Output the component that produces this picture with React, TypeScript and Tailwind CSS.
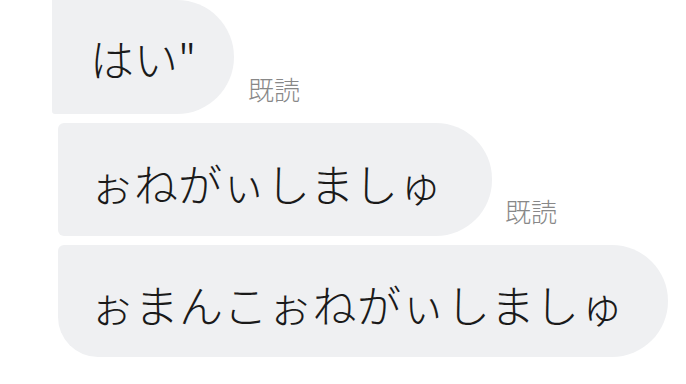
import React from "react";

const font = {
  fontFamily: '"Noto Sans CJK JP", "Noto Sans", sans-serif',
};

export default function App() {
  return (
    <div
      className="w-[686px] h-[384px] bg-white overflow-hidden flex flex-col"
      style={font}
    >
      <div className="flex items-end ml-[52px]">
        <div className="h-[114px] w-[182px] bg-[#eff0f2] rounded-r-[57px] rounded-bl-[3px] flex items-center pl-[38px] pt-[2px]">
          <span className="text-[44px] leading-none font-light text-[#1a1a1a]">はい"</span>
        </div>
        <span className="ml-[14px] mb-[12px] text-[26px] leading-none font-light text-[#888888]">既読</span>
      </div>
      <div className="flex items-end ml-[58px] mt-[9px]">
        <div className="h-[113px] w-[434px] bg-[#eff0f2] rounded-r-[56px] rounded-l-[6px] flex items-center pl-[32px] pt-[6px]">
          <span className="text-[44px] leading-none font-light text-[#1a1a1a]">ぉねがぃしましゅ</span>
        </div>
        <span className="ml-[13px] mb-[12px] text-[26px] leading-none font-light text-[#888888]">既読</span>
      </div>
      <div className="flex items-end ml-[58px] mt-[9px]">
        <div className="h-[112px] w-[610px] bg-[#eff0f2] rounded-r-[56px] rounded-tl-[6px] rounded-bl-[40px] flex items-center pl-[32px] pt-[6px]">
          <span className="text-[44px] leading-none font-light tracking-[0.5px] text-[#1a1a1a]">ぉまんこぉねがぃしましゅ</span>
        </div>
      </div>
    </div>
  );
}
